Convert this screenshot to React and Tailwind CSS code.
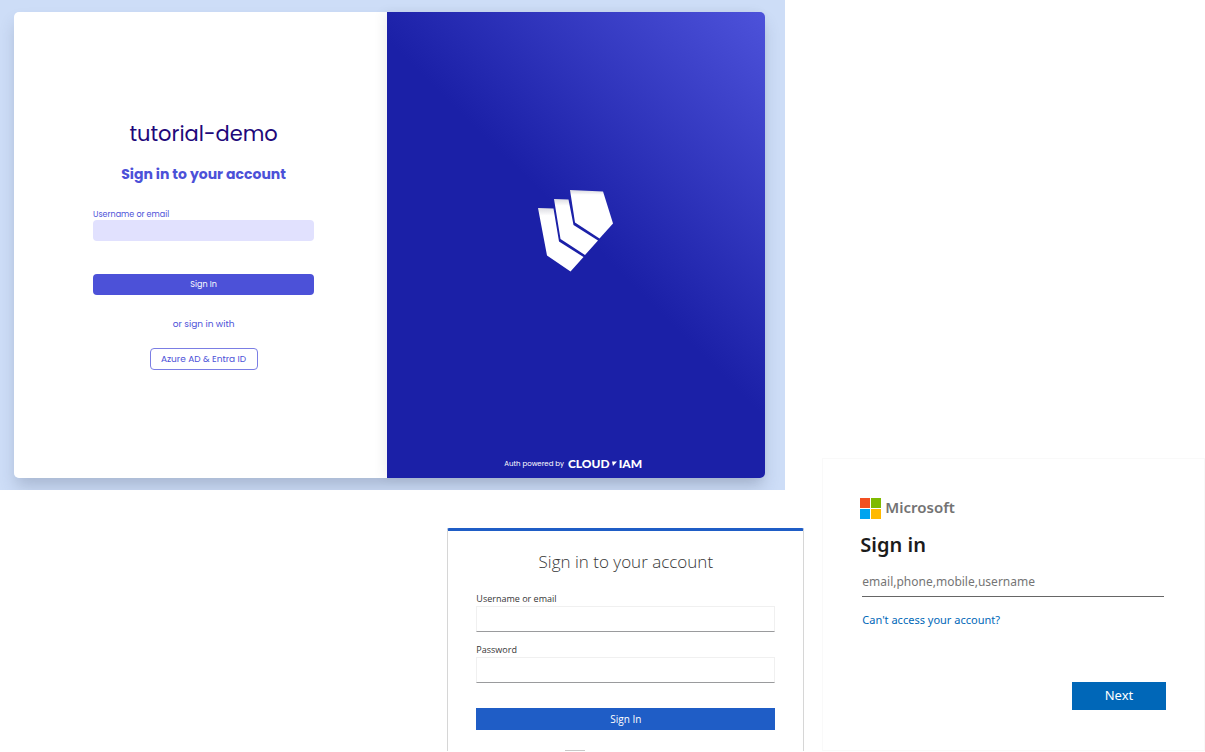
function CloudLogo() {
  return (
    <svg className="h-[82px] w-[76px]" viewBox="0 0 76 82" aria-hidden="true">
      <defs>
        <linearGradient id="fold" x1="0" y1="0" x2="0" y2="1">
          <stop offset="0" stopColor="#d9d9e0" />
          <stop offset="0.1" stopColor="#ffffff" />
        </linearGradient>
        <linearGradient id="foldLow" x1="0" y1="0" x2="0" y2="1">
          <stop offset="0" stopColor="#dcdce2" />
          <stop offset="0.12" stopColor="#ffffff" />
        </linearGradient>
      </defs>
      <path d="M0 18 L15.500 18.500 L21 51.500 L45.500 67 L32.500 81.500 L9 65.500 Z" fill="url(#foldLow)" />
      <path d="M16 9 L30.500 9.500 L35.500 35 L60 50.500 L47 65 L22.500 49 Z" fill="url(#foldLow)" />
      <path d="M32 0 L65 1.500 L75 33.500 L61.500 48.500 L37 32.500 Z" fill="url(#fold)" />
    </svg>
  );
}

function CloudLogin() {
  return (
    <section className="mr-[18px] overflow-hidden bg-[#cdddf7] pt-3 pr-5 pb-3 pl-[14px]">
      <div className="grid h-[466px] grid-cols-[373fr_378fr] rounded-[5px] shadow-[0_10px_16px_-2px_rgba(60,70,100,0.25)]">
        <div className="flex flex-col items-center rounded-l-[5px] bg-white pt-[106px] pr-[73px] pl-[79px] font-[Poppins,Inter,sans-serif] text-[#4c51d8]">
          <h1 className="text-[21px] leading-8 text-[#21077a]">tutorial-demo</h1>
          <h2 className="mt-3 text-[14px] leading-6 font-bold whitespace-nowrap">Sign in to your account</h2>
          <form className="mt-6 flex w-full flex-col" onSubmit={(e) => e.preventDefault()}>
            <label htmlFor="cloud-user" className="text-[8px] leading-[10px]">Username or email</label>
            <input id="cloud-user" className="h-[21px] rounded bg-[#e1e1fe] px-2 text-[9px] outline-none" />
            <button className="mt-[33px] h-[21px] rounded bg-[#4c51d8] text-[8px] text-white">Sign In</button>
          </form>
          <p className="mt-[21px] text-[9px] leading-4">or sign in with</p>
          <button className="mt-4 h-[22px] w-[108px] rounded border border-[#7b7ee4] text-[9px] leading-4 whitespace-nowrap">
            Azure AD &amp; Entra ID
          </button>
        </div>
        <div className="flex flex-col items-center justify-between rounded-r-[5px] bg-[linear-gradient(45deg,#1b20a7_52%,#4d52da_100%)] pt-[178px] pb-1.5 shadow-[-4px_0_12px_rgba(0,0,0,0.06)]">
          <CloudLogo />
          <p className="flex items-center gap-1 pr-1.5 font-[Poppins,Inter,sans-serif] text-[7px] leading-4 text-white">
            Auth powered by
            <span className="flex items-center gap-0.5 font-[Lato,sans-serif] text-[12px] font-black">
              CLOUD
              <svg className="h-2 w-[5px]" viewBox="0 0 5 8" aria-hidden="true">
                <path d="M0 1.500 L5 1.500 L1 6 Z" fill="currentColor" />
              </svg>
              IAM
            </span>
          </p>
        </div>
      </div>
    </section>
  );
}

function Field({ id, label, type }) {
  return (
    <div className="flex flex-col">
      <label htmlFor={id} className="text-[9px] leading-[14px] text-[#363636]">{label}</label>
      <input
        id={id}
        type={type}
        className="h-[26px] border border-[#f0f0f0] border-b-[#9a9b9d] bg-white px-2 text-[11px] outline-none"
      />
    </div>
  );
}

function AccountLogin() {
  return (
    <section className="mt-[38px] -mr-px flex h-[223px] w-[357px] flex-col self-end rounded-t-[2px] border-x border-t-[3px] border-x-[#d6d6d6] border-t-[#1f5dc6] bg-white px-7 pt-[17px] font-['Open_Sans',sans-serif]">
      <h2 className="text-center text-[17px] leading-7 font-light text-[#363636]">Sign in to your account</h2>
      <form className="mt-4 flex flex-col gap-[11px]" onSubmit={(e) => e.preventDefault()}>
        <Field id="account-user" label="Username or email" type="text" />
        <Field id="account-password" label="Password" type="password" />
        <button className="mt-3.5 h-[22px] bg-[#1f5dc6] text-[10px] text-white">Sign In</button>
      </form>
      <div className="mt-auto ml-[89px] h-px w-5 bg-[#c8c8c8]" />
    </section>
  );
}

function MicrosoftLogin() {
  return (
    <section className="mt-[458px] ml-[19px] flex h-[293px] flex-1 flex-col border border-[#f9f9f9] bg-white pt-[38px] pr-[38px] pl-[37px] font-['Noto_Sans',sans-serif]">
      <div className="flex items-center gap-1">
        <svg className="size-[21px]" viewBox="0 0 21 21" aria-hidden="true">
          <path d="M0 0h10v10H0z" fill="#f25022" />
          <path d="M11 0h10v10H11z" fill="#7fba00" />
          <path d="M0 11h10v10H0z" fill="#00a4ef" />
          <path d="M11 11h10v10H11z" fill="#ffb900" />
        </svg>
        <span className="pb-0.5 text-[15px] leading-5 font-semibold text-[#737373]">Microsoft</span>
      </div>
      <h2 className="mt-3 text-[20px] leading-7 font-semibold text-[#1b1b1b]">Sign in</h2>
      <form className="flex flex-col pl-0.5" onSubmit={(e) => e.preventDefault()}>
        <input
          aria-label="Account"
          placeholder="email,phone,mobile,username"
          className="mt-2 mr-0.5 h-[30px] border-b border-[#666666] text-[12px] outline-none placeholder:text-[#757575]"
        />
        <a href="#help" className="mt-[15px] text-[11px] leading-4 text-[#0067b8]">Can't access your account?</a>
        <button className="mt-[54px] h-7 w-[94px] self-end bg-[#0067b8] text-[13px] text-white">Next</button>
      </form>
    </section>
  );
}

export default function App() {
  return (
    <main className="flex items-start bg-white">
      <div className="flex w-2/3 flex-col">
        <CloudLogin />
        <AccountLogin />
      </div>
      <MicrosoftLogin />
    </main>
  );
}
